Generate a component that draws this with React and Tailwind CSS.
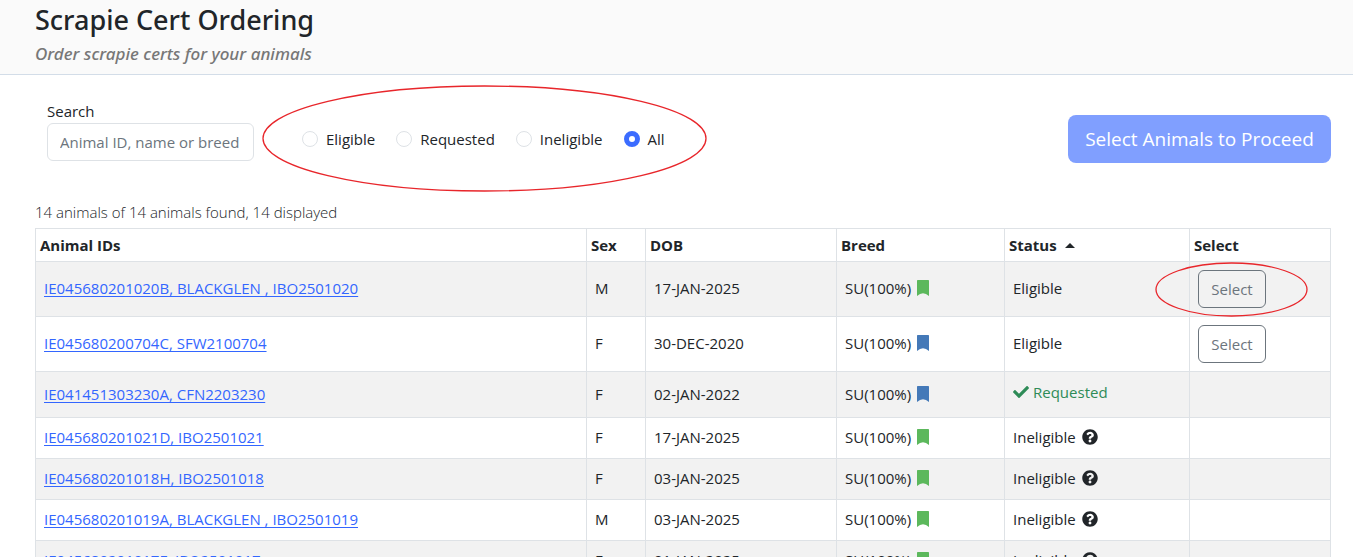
import React, { useState } from "react";
import { FaCheck, FaQuestionCircle } from "react-icons/fa";

const animals = [
  { ids: "IE045680201020B, BLACKGLEN , IBO2501020", sex: "M", dob: "17-JAN-2025", breed: "SU(100%)", flag: "green", status: "Eligible" },
  { ids: "IE045680200704C, SFW2100704", sex: "F", dob: "30-DEC-2020", breed: "SU(100%)", flag: "blue", status: "Eligible" },
  { ids: "IE041451303230A, CFN2203230", sex: "F", dob: "02-JAN-2022", breed: "SU(100%)", flag: "blue", status: "Requested" },
  { ids: "IE045680201021D, IBO2501021", sex: "F", dob: "17-JAN-2025", breed: "SU(100%)", flag: "green", status: "Ineligible" },
  { ids: "IE045680201018H, IBO2501018", sex: "F", dob: "03-JAN-2025", breed: "SU(100%)", flag: "green", status: "Ineligible" },
  { ids: "IE045680201019A, BLACKGLEN , IBO2501019", sex: "M", dob: "03-JAN-2025", breed: "SU(100%)", flag: "green", status: "Ineligible" },
  { ids: "IE045680201017F, IBO2501017", sex: "F", dob: "01-JAN-2025", breed: "SU(100%)", flag: "green", status: "Ineligible" },
];

const filters = ["Eligible", "Requested", "Ineligible", "All"];

const rowHeights = {
  Eligible: "h-[55px]",
  Requested: "h-[46px]",
  Ineligible: "h-[41px]",
};

const Bookmark = ({ color }) => (
  <svg
    viewBox="0 0 12 16"
    aria-hidden="true"
    className={`h-4 w-3 ${color === "green" ? "text-[#5cb85c]" : "text-[#4479b8]"}`}
  >
    <path
      fill="currentColor"
      d="M.7 0h10.6q.7 0 .7.7V16Q9 13.3 6 13.3T0 16V.7Q0 0 .7 0z"
    />
  </svg>
);

// Red ring used to call out part of the page
const Ring = ({ className }) => (
  <svg
    aria-hidden="true"
    className={`pointer-events-none absolute overflow-visible ${className}`}
  >
    <ellipse cx="50%" cy="50%" rx="50%" ry="50%" fill="none" stroke="#e8262b" strokeWidth="1.3" />
  </svg>
);

const Status = ({ status }) => {
  if (status === "Requested") {
    return (
      <span className="flex items-center gap-1 pb-1 text-[#2e8b57]">
        <FaCheck className="h-4 w-4" />
        Requested
      </span>
    );
  }

  return (
    <span className="flex items-center gap-1.5">
      {status}
      {status === "Ineligible" && <FaQuestionCircle className="h-4 w-4" />}
    </span>
  );
};

const AnimalRow = ({ animal, highlighted }) => (
  <tr className={`odd:bg-[#f2f2f2] ${rowHeights[animal.status]}`}>
    <td className="border border-[#dee2e6] px-2 pb-0.5">
      <a href="#" className="text-[#3366ff] underline underline-offset-2">
        {animal.ids}
      </a>
    </td>
    <td className="border border-[#dee2e6] px-2 pb-0.5">{animal.sex}</td>
    <td className="border border-[#dee2e6] px-2 pb-0.5">{animal.dob}</td>
    <td className="border border-[#dee2e6] px-2 pb-0.5">
      <span className="flex items-center gap-1.5">
        {animal.breed}
        <Bookmark color={animal.flag} />
      </span>
    </td>
    <td className="border border-[#dee2e6] px-2 pb-0.5">
      <Status status={animal.status} />
    </td>
    <td className="border border-[#dee2e6] px-2">
      {animal.status === "Eligible" && (
        <div className="relative flex">
          <button
            type="button"
            className="h-[38px] w-[68px] rounded-md border border-[#6c757d] text-[#6c757d]"
          >
            Select
          </button>
          {highlighted && <Ring className="-left-[42px] -top-[7px] h-[53px] w-[151px]" />}
        </div>
      )}
    </td>
  </tr>
);

const App = () => {
  const [filter, setFilter] = useState("All");

  return (
    <div className="h-screen overflow-hidden bg-white font-['Open_Sans',sans-serif] text-[15px] leading-6 text-[#212529]">
      <header className="border-b border-[#d3dde8] bg-[#fafafa] px-[35px] pb-2 font-['Noto_Sans',sans-serif]">
        <h1 className="pt-1 text-[27px] font-medium leading-8">Scrapie Cert Ordering</h1>
        <p className="pt-1.5 text-[17px] font-medium italic leading-6 text-[#777777]">
          Order scrapie certs for your animals
        </p>
      </header>

      <main className="pl-[35px] pr-[22px]">
        <div className="flex items-start pt-6">
          <div className="ml-3 flex w-[207px] flex-col">
            <label htmlFor="search">Search</label>
            <input
              id="search"
              type="text"
              placeholder="Animal ID, name or breed"
              className="h-[38px] w-full rounded-md border border-[#dee2e6] px-3 placeholder:text-[#6c757d]"
            />
          </div>

          <fieldset className="relative ml-12 mt-7 flex gap-[21px]">
            {filters.map((name) => (
              <label key={name} className="flex items-center gap-2">
                <input
                  type="radio"
                  name="filter"
                  checked={filter === name}
                  onChange={() => setFilter(name)}
                  className="h-4 w-4 appearance-none rounded-full border border-[#dee2e6] bg-white checked:border-[5px] checked:border-[#3b6cff]"
                />
                {name}
              </label>
            ))}
            <Ring className="-left-[39px] -top-[41px] h-[105px] w-[443px]" />
          </fieldset>

          <button
            type="button"
            disabled
            className="ml-auto mt-4 h-12 w-[263px] rounded-lg bg-[#809fff] text-[19px] text-white"
          >
            Select Animals to Proceed
          </button>
        </div>

        <p className="pt-[37px] font-light">14 animals of 14 animals found, 14 displayed</p>

        <table className="mt-1 w-full table-fixed border-collapse">
          <thead>
            <tr className="h-[33px] text-left font-bold">
              <th className="border border-[#dee2e6] px-1">Animal IDs</th>
              <th className="w-[59px] border border-[#dee2e6] px-1">Sex</th>
              <th className="w-[191px] border border-[#dee2e6] px-1">DOB</th>
              <th className="w-[168px] border border-[#dee2e6] px-1">Breed</th>
              <th className="w-[185px] border border-[#dee2e6] px-1">
                <span className="flex items-center gap-2">
                  Status
                  <svg viewBox="0 0 10 5" aria-hidden="true" className="h-[5px] w-2.5">
                    <path fill="currentColor" d="M5 0l5 5H0z" />
                  </svg>
                </span>
              </th>
              <th className="w-[141px] border border-[#dee2e6] px-1">Select</th>
            </tr>
          </thead>
          <tbody>
            {animals.map((animal, index) => (
              <AnimalRow key={animal.ids} animal={animal} highlighted={index === 0} />
            ))}
          </tbody>
        </table>
      </main>
    </div>
  );
};

export default App;
